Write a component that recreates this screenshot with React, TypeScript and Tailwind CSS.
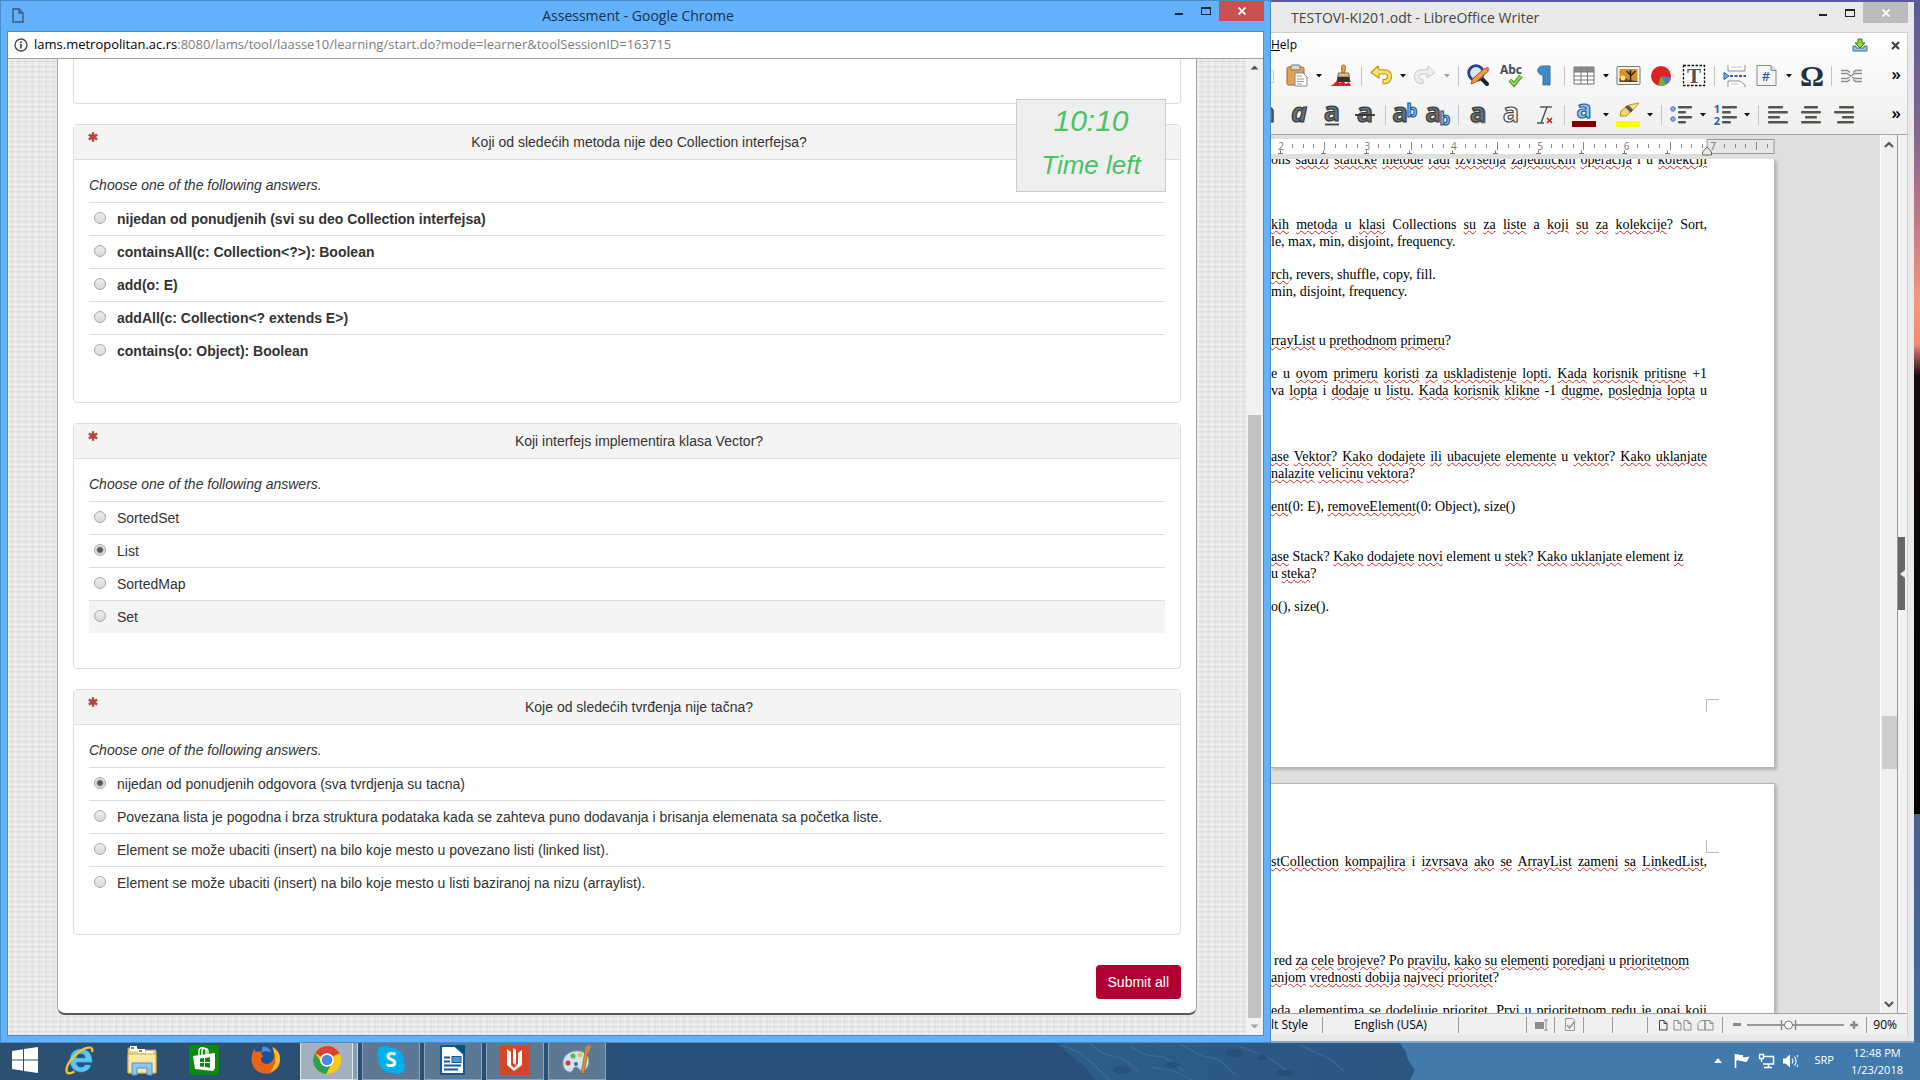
import React, { type ReactNode } from 'react';

type Question = { id: string; title: string; bold?: boolean; answers: string[]; selected?: number; hovered?: number };

const questions: Question[] = [
  {
    id: 'q1',
    title: 'Koji od sledećih metoda nije deo Collection interfejsa?',
    bold: true,
    answers: [
      'nijedan od ponudjenih (svi su deo Collection interfejsa)',
      'containsAll(c: Collection<?>): Boolean',
      'add(o: E)',
      'addAll(c: Collection<? extends E>)',
      'contains(o: Object): Boolean',
    ],
  },
  {
    id: 'q2',
    title: 'Koji interfejs implementira klasa Vector?',
    answers: ['SortedSet', 'List', 'SortedMap', 'Set'],
    selected: 1,
    hovered: 3,
  },
  {
    id: 'q3',
    title: 'Koje od sledećih tvrđenja nije tačna?',
    answers: [
      'nijedan od ponudjenih odgovora (sva tvrdjenja su tacna)',
      'Povezana lista je pogodna i brza struktura podataka kada se zahteva puno dodavanja i brisanja elemenata sa početka liste.',
      'Element se može ubaciti (insert) na bilo koje mesto u povezano listi (linked list).',
      'Element se može ubaciti (insert) na bilo koje mesto u listi baziranoj na nizu (arraylist).',
    ],
    selected: 0,
  },
];

function Asterisk() {
  return (
    <svg width="10" height="10" viewBox="0 0 10 10" className="mt-1 shrink-0" aria-label="required">
      <path d="M5 0.3v9.4M0.8 2.6l8.4 4.8M9.2 2.6L0.8 7.4" stroke="#b8423f" strokeWidth="2.4" />
    </svg>
  );
}

function QuestionCard({ q }: { q: Question }) {
  return (
    <section className="rounded border border-[#dddddd]">
      <header className="flex h-[35px] items-start border-b border-[#dddddd] bg-[#f4f4f4] pt-[3px] pl-[14px]">
        <Asterisk />
        <h2 className="flex-1 pt-1 text-center leading-5">{q.title}</h2>
      </header>
      <fieldset className="px-[15px] pb-[35px]">
        <legend className="contents">
          <span className="flex h-[42px] items-center pt-2 italic">Choose one of the following answers.</span>
        </legend>
        {q.answers.map((a, i) => (
          <label
            key={a}
            className={
              'flex h-[33px] items-center border-t border-[#dddddd] pl-[5px] ' +
              (q.bold ? 'font-bold ' : '') +
              (q.hovered === i ? 'bg-[#f4f4f4]' : '')
            }
          >
            <input
              type="radio"
              name={q.id}
              defaultChecked={q.selected === i}
              className="mr-[11px] mb-0.5 h-3 w-3 appearance-none rounded-full border border-[#a9a9a9] bg-[linear-gradient(#ededed,#d9d9d9)] checked:bg-[radial-gradient(circle,#555555_0_2px,#e2e2e2_4px)]"
            />
            {a}
          </label>
        ))}
      </fieldset>
    </section>
  );
}

function ChromeWindow() {
  return (
    <section className="relative flex min-w-0 flex-[1269] flex-col border border-[#4a8bc9] bg-[#64b1fb] pb-[6px] font-['Open_Sans',sans-serif]">
      <header className="flex h-[30px] items-start pr-[6px]">
        <div className="flex-1 pt-[7px] pl-[11px]">
          <svg width="12" height="15" viewBox="0 0 12 15" fill="none" stroke="#3c5a78" strokeWidth="1.4">
            <path d="M1 1h6l4 4v9H1zM7 1v4h4" />
          </svg>
        </div>
        <h1 className="pt-[5px] text-[14px] leading-5 text-[#16304d]">Assessment - Google Chrome</h1>
        <div className="flex flex-1 justify-end">
          <button aria-label="Minimize" className="flex h-5 w-[27px] items-center justify-center">
            <span className="mt-1.5 h-0.5 w-2 bg-[#10263c]" />
          </button>
          <button aria-label="Maximize" className="flex h-5 w-[27px] items-center justify-center">
            <span className="h-2 w-2.5 border border-t-2 border-[#10263c]" />
          </button>
          <button aria-label="Close" className="flex h-5 w-[45px] items-center justify-center bg-[#c75050]">
            <svg width="8" height="8" viewBox="0 0 8 8" stroke="#fff" strokeWidth="1.8">
              <path d="M0.5 0.5l7 7M7.5 0.5l-7 7" />
            </svg>
          </button>
        </div>
      </header>
      <div className="mx-[6px] flex min-h-0 flex-1 flex-col border border-[#4a8bc9] bg-white">
        <div className="flex h-[27px] shrink-0 items-center border-b border-[#a0a0a0] pl-1.5">
          <svg width="14" height="14" viewBox="0 0 14 14" fill="none" stroke="#4a4a4a" strokeWidth="1.4" className="mr-1.5">
            <circle cx="7" cy="7" r="6" />
            <path d="M7 6v4.5M7 3.3v1.6" strokeWidth="1.8" />
          </svg>
          <p className="text-[13px] text-[#7d7d7d]">
            <span className="text-black">lams.metropolitan.ac.rs</span>
            :8080/lams/tool/laasse10/learning/start.do?mode=learner&amp;toolSessionID=163715
          </p>
        </div>
        <div className="flex min-h-0 flex-1">
          <div className="flex-1 overflow-hidden bg-[#e8e8e8] bg-[repeating-linear-gradient(90deg,rgba(255,255,255,0.3)_0_1px,transparent_1px_3px,rgba(190,190,190,0.2)_3px_4px,transparent_4px_7px),repeating-linear-gradient(0deg,rgba(255,255,255,0.3)_0_1px,transparent_1px_3px,rgba(190,190,190,0.2)_3px_4px,transparent_4px_5px)] px-[49px] pb-5 font-['Liberation_Sans',Arial,sans-serif] text-[14px] text-[#333333]">
            <div className="flex h-full flex-col gap-5 rounded-b-lg border-x border-b-2 border-x-[#a8a8a8] border-b-[#5a5a5a] bg-white px-[15px]">
              <div className="h-[45px] shrink-0 rounded-b border border-t-0 border-[#dddddd]" />
              {questions.map((q) => (
                <QuestionCard key={q.id} q={q} />
              ))}
              <div className="flex justify-end pt-2.5">
                <button className="h-[34px] rounded bg-[#b00033] px-3 text-white">Submit all</button>
              </div>
            </div>
          </div>
          <div className="flex w-[17px] flex-col items-center bg-[#f1f1f1]">
            <svg width="17" height="17" viewBox="0 0 17 17">
              <path d="M4.5 10.5l4-4 4 4z" fill="#505050" />
            </svg>
            <div className="flex-[339]" />
            <div className="w-[13px] flex-[603] bg-[#c1c1c1]" />
            <svg width="17" height="17" viewBox="0 0 17 17">
              <path d="M4.5 6.5l4 4 4-4z" fill="#a3a3a3" />
            </svg>
          </div>
        </div>
      </div>
      <aside className="absolute top-[98px] right-[104px] flex h-[93px] w-[150px] flex-col items-center border border-[#cccccc] bg-[#ededed]/90 font-['Liberation_Sans',Arial,sans-serif] text-[#4bc266] italic">
        <span className="pt-[3px] text-[30px] leading-9">10:10</span>
        <span className="pt-2 text-[26px] leading-9">Time left</span>
      </aside>
    </section>
  );
}

/* ---------- Writer ---------- */

function Ico({ children, w = 22 }: { children: ReactNode; w?: number }) {
  return (
    <button className="shrink-0">
      <svg width={w} height="24" viewBox={`0 0 ${w} 24`} className="block overflow-visible">
        {children}
      </svg>
    </button>
  );
}

function Drop({ faded = false }: { faded?: boolean }) {
  return (
    <button aria-label="More" className="flex w-[22px] shrink-0 justify-center">
      <svg width="6" height="4" viewBox="0 0 6 4">
        <path d="M0 0h6L3 3.6z" fill={faded ? '#a0a0a0' : '#111'} />
      </svg>
    </button>
  );
}

const Gap = () => <span className="w-[11px] shrink-0" />;
const Sep = () => <span className="mr-2 ml-[9px] h-5 w-px shrink-0 bg-[#c4c4c4]" />;
const SepTight = () => <span className="mr-2 h-5 w-px shrink-0 bg-[#c4c4c4]" />;

function Letter({
  x = 11,
  y = 19,
  size = 27,
  fill = '#6a7073',
  stroke = '#33383a',
  italic = false,
  children,
}: {
  x?: number;
  y?: number;
  size?: number;
  fill?: string;
  stroke?: string;
  italic?: boolean;
  children: string;
}) {
  return (
    <text
      x={x}
      y={y}
      textAnchor="middle"
      fontFamily="Open Sans, sans-serif"
      fontWeight="700"
      fontStyle={italic ? 'italic' : 'normal'}
      fontSize={size}
      fill={fill}
      stroke={stroke}
      strokeWidth="1.2"
    >
      {children}
    </text>
  );
}

function BarLines({ rows, x = 0 }: { rows: [number, number][]; x?: number }) {
  return (
    <g fill="#55554f">
      {rows.map(([dx, w], i) => (
        <rect key={i} x={x + dx} y={3 + i * 5} width={w} height="2.6" rx="1" />
      ))}
    </g>
  );
}

function StandardToolbar() {
  return (
    <div className="flex h-[38px] items-center pr-[6px]">
      <span className="h-[13px] w-[3px] border-y border-r border-[#cccccc]" />
      <span className="w-3 shrink-0" />
      <Ico>
        <rect x="1" y="3" width="17" height="18" rx="1.5" fill="#e0a352" stroke="#9c6a24" />
        <rect x="5" y="1" width="9" height="5" rx="1" fill="#d8d8d4" stroke="#77776f" />
        <path d="M9 9h8l4 4v9H9z" fill="#fff" stroke="#8a8a8a" />
        <path d="M11 12h5M11 15h7M11 17.5h7M11 20h5" stroke="#999" />
      </Ico>
      <Drop />
      <Ico>
        <path d="M13.5 1c2 0 2 1.500 1.700 4l-.4 4h-2.800l-.3-4c-.3-2.500 0-4 1.800-4z" fill="#e6a54a" stroke="#9c6a24" />
        <path d="M8.500 9h10l1 4h-12z" fill="#d9c08a" stroke="#8a6a30" />
        <path d="M7.500 13h12l1 5h-14z" fill="#333" />
        <path d="M0 22c4-1 5-4 7-5l3 2 3-2 3 3 3-2 2 4z" fill="#d3222d" />
      </Ico>
      <Sep />
      <Ico>
        <path
          d="M8 2L1 8.500l8 5.500v-4h6c3.500 0 3.500 5 0 5.500l-2 .2v4c11 1 11-13.700 2-13.900H9z"
          fill="#fbe46b"
          stroke="#c19a1b"
          strokeWidth="1.200"
          strokeLinejoin="round"
        />
      </Ico>
      <Drop />
      <Ico>
        <path
          d="M14 2l7 6.500-8 5.500v-4H8c-3.500 0-3.500 5 0 5.500l1 .2v4C-2 20.700-2 6 7 5.800h6.500z"
          fill="#eeeeee"
          stroke="#c6c6c6"
          strokeLinejoin="round"
        />
      </Ico>
      <Drop faded />
      <SepTight />
      <Ico>
        <path d="M14 14l6 6" stroke="#222" strokeWidth="4" strokeLinecap="round" />
        <circle cx="9" cy="9" r="7.300" fill="#d7e6f4" stroke="#27408b" strokeWidth="2.800" />
        <path d="M18 4l3.500 3L9 18l-5 2 1.500-5z" fill="#f29b3b" stroke="#a85a15" />
        <path d="M18 4l3.500 3 1-2.500-2-2z" fill="#e46a76" />
      </Ico>
      <Gap />
      <Ico>
        <text x="11" y="10" textAnchor="middle" fontFamily="Open Sans, sans-serif" fontWeight="700" fontSize="12" fill="#444a4e">
          Abc
        </text>
        <path d="M10 16l4 4.500L21 12" fill="none" stroke="#3f8a17" strokeWidth="4" />
        <path d="M10 16l4 4.500L21 12" fill="none" stroke="#94d94f" strokeWidth="2" />
      </Ico>
      <Gap />
      <Ico>
        <path d="M17 2H10c-7 0-7 9 0 9v10h3V5h1v16h3z" fill="#3f8fd0" stroke="#2b6ea8" strokeLinejoin="round" />
      </Ico>
      <Sep />
      <Ico>
        <path d="M1 3h20v17H1z" fill="#fff" stroke="#6f6f6f" />
        <path d="M1 3h20v5H1z" fill="#8b8b8b" />
        <path d="M1 8h20M1 12h20M1 16h20M8 3v17M14.500 3v17" stroke="#777" fill="none" />
      </Ico>
      <Drop />
      <Ico>
        <rect x="0" y="2.500" width="23" height="18" rx="1" fill="#f2f2f0" stroke="#77776f" />
        <rect x="2.500" y="5" width="18" height="13" fill="#dd8f2c" />
        <path d="M2.500 18v-4c3 1 6-1 9 2l9 1v1z" fill="#6c4a18" />
        <circle cx="6" cy="14" r="2.500" fill="#ffe27a" />
        <path d="M13.500 18v-7l-4-4M13.500 12l5-5M13.500 10V6" stroke="#2b1c0a" strokeWidth="1.400" fill="none" />
      </Ico>
      <Gap />
      <Ico>
        <circle cx="11" cy="12" r="10" fill="#dc2322" />
        <path d="M11 12l10 1.500a10 10 0 01-4.500 7z" fill="#4a7fc1" />
        <path d="M11 12l5.500 8.500a10 10 0 01-8.500 1z" fill="#6cb33e" />
      </Ico>
      <Gap />
      <Ico>
        <rect x="0.500" y="1.500" width="21" height="20" fill="#fff" stroke="#111" strokeDasharray="2.500 1.500" strokeWidth="1.300" />
        <text x="11" y="19" textAnchor="middle" fontFamily="Liberation Serif, serif" fontWeight="700" fontSize="21" fill="#4d5356">
          T
        </text>
      </Ico>
      <Sep />
      <Ico>
        <path d="M5 1v6h17V1M5 23v-6h12l5 4v2" fill="#fff" stroke="#8e8e8e" />
        <path d="M8 3h11M8 20h7" stroke="#bbb" />
        <path d="M7 12h16" stroke="#2e6099" strokeWidth="2" strokeDasharray="3 1.500" />
        <path d="M1 8.500l5 3.500-5 3.500z" fill="#7fb0e0" stroke="#2e6099" />
      </Ico>
      <Gap />
      <Ico>
        <path d="M1 1.500h14l5 5v15H1z" fill="#f6f6f6" stroke="#8b8b8b" />
        <path d="M15 1.500v5h5" fill="#ddd" stroke="#8b8b8b" />
        <text x="10" y="17" textAnchor="middle" fontFamily="Open Sans, sans-serif" fontSize="13" fontWeight="600" fill="#2b5f9e">
          #
        </text>
      </Ico>
      <Drop />
      <Ico>
        <text x="12" y="22" textAnchor="middle" fontFamily="Liberation Serif, serif" fontWeight="700" fontSize="30" fill="#2b3032">
          Ω
        </text>
      </Ico>
      <Sep />
      <Ico>
        <g fill="none" stroke="#8b8f90" strokeWidth="1.500">
          <path d="M10 8.500L7.500 6.500H1M13 8.500l2.500-2H22M10 15.500l-2.500 2H1M13 15.500l2.500 2H22" />
          <path d="M1 9.500h6l7.500 5H22M1 14.500h6l7.500-5H22" />
        </g>
      </Ico>
      <button className="ml-auto pb-1 text-[17px] leading-5 font-semibold">»</button>
    </div>
  );
}

function FormattingToolbar() {
  return (
    <div className="flex h-[39px] items-center pr-[6px]">
      <Ico w={6}>
        <Letter x={-4}>a</Letter>
      </Ico>
      <Gap />
      <Ico>
        <Letter italic>a</Letter>
      </Ico>
      <Gap />
      <Ico>
        <Letter y={18}>a</Letter>
        <path d="M4 21.500h14" stroke="#444" strokeWidth="1.800" />
      </Ico>
      <Gap />
      <Ico>
        <Letter>a</Letter>
        <path d="M1 12h20" stroke="#333" strokeWidth="1.800" />
      </Ico>
      <Sep />
      <Ico>
        <Letter x={6} size={26}>
          a
        </Letter>
        <Letter x={18} y={14} size={17} fill="#9dc1ea" stroke="#2a5a9a">
          b
        </Letter>
      </Ico>
      <Gap />
      <Ico>
        <Letter x={6} size={26}>
          a
        </Letter>
        <Letter x={18} y={22} size={17} fill="#9dc1ea" stroke="#2a5a9a">
          b
        </Letter>
      </Ico>
      <Sep />
      <Ico>
        <Letter x={12} y={20} fill="#aaa" stroke="#aaa">
          a
        </Letter>
        <Letter>a</Letter>
      </Ico>
      <Gap />
      <Ico>
        <Letter fill="#fff" stroke="#444">
          a
        </Letter>
      </Ico>
      <Gap />
      <Ico>
        <path d="M7 4h12M4 20h7M14 4L8 20" stroke="#555" strokeWidth="1.500" fill="none" />
        <path d="M14 15l5 5M19 15l-5 5" stroke="#d2232f" strokeWidth="1.700" />
      </Ico>
      <Sep />
      <Ico>
        <Letter y={15} size={25} fill="#9dc1ea" stroke="#2a5a9a">
          a
        </Letter>
        <rect x="-1" y="18" width="24" height="6" fill="#800000" />
      </Ico>
      <Drop />
      <Ico>
        <path d="M3 13l1-5 6-5 5 5-6 5z" fill="#f1dc61" stroke="#a88c2a" />
        <path d="M8 4l5.500 5.500 3-2.500-5.500-5z" fill="#555" />
        <path d="M12 2l10-2-6 7z" fill="#f4e27c" stroke="#b89c33" />
        <rect x="-1" y="18" width="24" height="6" fill="#ffff00" />
      </Ico>
      <Drop />
      <SepTight />
      <Ico>
        <circle cx="3" cy="6" r="2.200" fill="#8db4e2" stroke="#4272a8" />
        <circle cx="3" cy="16" r="2.200" fill="#8db4e2" stroke="#4272a8" />
        <BarLines x={8} rows={[[0, 14], [0, 8], [0, 14], [0, 8]]} />
      </Ico>
      <Drop />
      <Ico>
        <text x="3" y="10" textAnchor="middle" fontFamily="Open Sans, sans-serif" fontWeight="700" fontSize="11" fill="#2b5f9e">
          1
        </text>
        <text x="3" y="22" textAnchor="middle" fontFamily="Open Sans, sans-serif" fontWeight="700" fontSize="11" fill="#2b5f9e">
          2
        </text>
        <BarLines x={8} rows={[[0, 15], [0, 9], [0, 15], [0, 9]]} />
      </Ico>
      <Drop />
      <SepTight />
      <Ico>
        <BarLines x={1} rows={[[0, 15], [0, 20], [0, 12], [0, 20]]} />
      </Ico>
      <Gap />
      <Ico>
        <BarLines x={1} rows={[[3, 14], [0, 20], [4, 12], [0, 20]]} />
      </Ico>
      <Gap />
      <Ico>
        <BarLines x={1} rows={[[5, 15], [0, 20], [8, 12], [3, 17]]} />
      </Ico>
      <button className="ml-auto pb-1 text-[17px] leading-5 font-semibold">»</button>
    </div>
  );
}

const rulerTicks = Array.from({ length: 46 }, (_, i) => i);

function Ruler() {
  return (
    <div className="flex h-6 shrink-0 items-start bg-[#dfdfdf] pt-1">
      <svg width="504" height="20" viewBox="0 0 504 20" className="block">
        <rect x="0" y="0" width="436" height="15" fill="#fff" />
        <rect x="436" y="0.500" width="67" height="14" fill="#e6e6e6" stroke="#9a9a9a" />
        {rulerTicks.map((i) => {
          if (i % 8 === 0) {
            return (
              <text key={i} x={10 + i * 10.8} y="11" textAnchor="middle" fontFamily="Open Sans, sans-serif" fontSize="10" fill="#777">
                {2 + i / 8}
              </text>
            );
          }
          const half = i % 4 === 0;
          return <rect key={i} x={Math.round(10 + i * 10.8)} y={half ? 3 : 5} width="1" height={half ? 8 : 4} fill="#888" />;
        })}
        {rulerTicks.slice(0, 10).map((i) => (
          <path key={i} d={`M${Math.round(7 + i * 43)} 14.500h5m-2.500 0v-3`} stroke="#777" fill="none" />
        ))}
        <path d="M431.500 16v-3l4.500-5 4.500 5v3z" fill="#e8e8e8" stroke="#666" />
      </svg>
    </div>
  );
}

/* Words wrapped in underscores carry the spell-check squiggle. */
function DocLine({ text, justify = false, className = '' }: { text: string; justify?: boolean; className?: string }) {
  return (
    <p className={'h-[17px] whitespace-nowrap ' + (justify ? 'w-[436px] [text-align-last:justify] ' : '') + className}>
      {text.split('_').map((part, i) =>
        i % 2 === 1 ? (
          <span key={i} className="underline decoration-[#d0221c] decoration-wavy decoration-1 underline-offset-1">
            {part}
          </span>
        ) : (
          part
        ),
      )}
    </p>
  );
}

function WriterDocument() {
  return (
    <div className="flex min-h-0 flex-1 flex-col gap-[15px] overflow-hidden bg-[#dfdfdf] font-['Liberation_Serif','Times_New_Roman',serif] text-[14px] leading-[17px] text-black">
      <article className="h-[609px] w-[504px] shrink-0 overflow-hidden border-r border-b border-[#b5b5b5] bg-white shadow-[2px_2px_3px_rgba(0,0,0,0.2)]">
        <DocLine justify className="-mt-2" text="ons _sadrzi_ _staticke_ _metode_ _radi_ _izvrsenja_ _zajednickih_ _operacija_ i u _kolekciji_" />
        <DocLine justify className="mt-12" text="_kih_ _metoda_ u _klasi_ Collections _su_ _za_ _liste_ a _koji_ _su_ _za_ _kolekcije_? Sort," />
        <DocLine text="le, max, min, disjoint, frequency." />
        <DocLine className="mt-4" text="_rch_, revers, shuffle, copy, fill." />
        <DocLine text="min, disjoint, frequency." />
        <DocLine className="mt-8" text="_rrayList_ u _prethodnom_ _primeru_?" />
        <DocLine justify className="mt-4" text="e u _ovom_ _primeru_ _koristi_ _za_ _uskladistenje_ _lopti_. _Kada_ _korisnik_ _pritisne_ +1" />
        <DocLine justify text="va _lopta_ i _dodaje_ u _listu_. _Kada_ _korisnik_ _klikne_ -1 _dugme_, _poslednja_ _lopta_ u" />
        <DocLine justify className="mt-[49px]" text="_ase_ _Vektor_? _Kako_ _dodajete_ _ili_ _ubacujete_ _elemente_ u _vektor_? _Kako_ _uklanjate_" />
        <DocLine text="_nalazite_ _velicinu_ _vektora_?" />
        <DocLine className="mt-4" text="_ent_(0: E), _removeElement_(0: Object), size()" />
        <DocLine className="mt-[33px]" text="_ase_ Stack? _Kako_ _dodajete_ _novi_ element u _stek_? _Kako_ _uklanjate_ element _iz_" />
        <DocLine text="u _steka_?" />
        <DocLine className="mt-4" text="o(), size()." />
        <div className="mt-[84px] ml-[435px] h-[13px] w-[13px] border-t border-l border-[#bdbdbd]" />
      </article>
      <article className="w-[504px] flex-1 overflow-hidden border-t border-r border-[#b5b5b5] bg-white pt-14 shadow-[2px_2px_3px_rgba(0,0,0,0.2)]">
        <div className="ml-[435px] h-[13px] w-[13px] border-b border-l border-[#bdbdbd]" />
        <DocLine justify text="_stCollection_ _kompajlira_ i _izvrsava_ _ako_ _se_ _ArrayList_ _zameni_ _sa_ _LinkedList_," />
        <DocLine className="mt-[82px] pl-[3px]" text="red _za_ _cele_ _brojeve_? Po _pravilu_, _kako_ _su_ _elementi_ _poredjani_ u _prioritetnom_" />
        <DocLine text="_anjom_ _vrednosti_ _dobija_ _najveci_ _prioritet_?" />
        <DocLine justify className="mt-4" text="eda, elementima se dodeljuje prioritet. Prvi u prioritetnom redu je onaj koji" />
      </article>
    </div>
  );
}

const StatusSep = ({ className }: { className: string }) => (
  <span className={'h-[16px] w-px shrink-0 bg-[#9a9a9a] ' + className} />
);

function StatusBar() {
  return (
    <footer className="flex h-[22px] shrink-0 items-center border-t border-[#a0a0a0] bg-[#f0f0f0] pr-2.5 text-[12px] text-black">
      <span className="w-[51px] whitespace-nowrap">lt Style</span>
      <StatusSep className="" />
      <span className="w-[135px] text-center whitespace-nowrap">English (USA)</span>
      <StatusSep className="" />
      <StatusSep className="ml-[67px]" />
      <svg width="27" height="16" viewBox="0 0 27 16" className="shrink-0">
        <rect x="8" y="5" width="9" height="7" fill="#8c8c8c" />
        <path d="M17 3h4M17 13h4M19 3v10" stroke="#8c8c8c" />
      </svg>
      <StatusSep className="" />
      <svg width="28" height="16" viewBox="0 0 28 16" className="shrink-0" fill="none" stroke="#999">
        <path d="M10.500 1.500h7l2 2v10h-9z" />
        <path d="M12 8l2.500 3L20 4" strokeWidth="1.500" />
      </svg>
      <StatusSep className="" />
      <StatusSep className="ml-7" />
      <StatusSep className="ml-[34px]" />
      <svg width="74" height="16" viewBox="0 0 74 16" className="shrink-0" fill="none">
        <path d="M11.500 3.500h4.500l3 3v6.500h-7.500zM16 3.500v3h3" stroke="#444" />
        <path d="M26 3.500h4l3 3v6.500h-7zM30 3.500v3h3M36 3.500h4l3 3v6.500h-7zM40 3.500v3h3M50 6.500l3-3h4v9.500h-7zM57 3.500h5l3 3v6.500h-8zM62 3.500v3h3" stroke="#8d8d8d" />
      </svg>
      <StatusSep className="" />
      <button aria-label="Zoom out" className="ml-2.5 h-[3px] w-2 shrink-0 bg-[#8a8a8a]" />
      <svg width="97" height="14" viewBox="0 0 97 14" className="mx-1.5 shrink-0">
        <path d="M0 7h97" stroke="#9a9a9a" strokeWidth="2" />
        <path d="M34.500 2v10M48.500 2v10" stroke="#8a8a8a" strokeWidth="1.500" />
        <circle cx="41.500" cy="7" r="4" fill="#fff" stroke="#777" />
      </svg>
      <button aria-label="Zoom in" className="shrink-0">
        <svg width="8" height="8" viewBox="0 0 8 8" stroke="#8a8a8a" strokeWidth="2.400">
          <path d="M4 0v8M0 4h8" />
        </svg>
      </button>
      <StatusSep className="ml-2" />
      <span className="ml-auto">90%</span>
    </footer>
  );
}

function WriterWindow() {
  return (
    <section className="mt-0.5 flex min-w-0 flex-[637] flex-col border-b-2 border-[#8ba4bd] bg-[#e9e9e9] pr-[6px] pb-[6px] font-['Open_Sans',sans-serif]">
      <header className="flex h-[30px] shrink-0 items-start">
        <h1 className="flex-1 pt-[5px] pl-5 text-[14px] leading-[22px] whitespace-nowrap text-[#444444]">TESTOVI-KI201.odt - LibreOffice Writer</h1>
        <button aria-label="Minimize" className="flex h-[21px] w-[27px] items-center justify-center">
          <span className="mt-1 h-0.5 w-2 bg-[#222222]" />
        </button>
        <button aria-label="Maximize" className="flex h-[21px] w-[27px] items-center justify-center">
          <span className="h-2 w-2.5 border border-t-2 border-[#222222]" />
        </button>
        <button aria-label="Close" className="flex h-[21px] w-[45px] items-center justify-center bg-[#bcbcbc]">
          <svg width="8" height="8" viewBox="0 0 8 8" stroke="#fff" strokeWidth="1.800">
            <path d="M0.500 0.500l7 7M7.500 0.500l-7 7" />
          </svg>
        </button>
      </header>
      <div className="flex min-h-0 flex-1 flex-col border-t border-r border-[#cfcfcf]">
        <div className="shrink-0 border-b border-[#a8a8a8] bg-[linear-gradient(#ffffff,#efefef)]">
          <nav className="flex h-6 items-center pr-[7px] text-[12px]">
            <button className="flex-1 text-left text-black">
              <span className="underline">H</span>elp
            </button>
            <svg width="16" height="14" viewBox="0 0 16 14" className="mr-[23px]">
              <path d="M1 8v5h14V8h-3v2H4V8z" fill="#9fc3e6" stroke="#3d6c9c" />
              <path d="M6 1h4v4h3L8 10 3 5h3z" fill="#9bd637" stroke="#3c7d12" />
            </svg>
            <button aria-label="Close document">
              <svg width="9" height="9" viewBox="0 0 9 9" stroke="#444" strokeWidth="2.200">
                <path d="M1 1l7 7M8 1L1 8" />
              </svg>
            </button>
          </nav>
          <StandardToolbar />
          <FormattingToolbar />
        </div>
        <div className="flex min-h-0 flex-1">
          <div className="flex min-w-0 flex-1 flex-col">
            <Ruler />
            <WriterDocument />
          </div>
          <div className="flex w-[17px] flex-col items-center border-l border-white bg-[#f0f0f0]">
            <svg width="16" height="18" viewBox="0 0 16 18" className="shrink-0">
              <path d="M4 12l4-4 4 4" fill="none" stroke="#555" strokeWidth="2.200" />
            </svg>
            <div className="flex-[563]" />
            <div className="w-[15px] flex-[53] bg-[#cdcdcd]" />
            <div className="flex-[226]" />
            <svg width="16" height="18" viewBox="0 0 16 18" className="shrink-0">
              <path d="M4 7l4 4 4-4" fill="none" stroke="#555" strokeWidth="2.200" />
            </svg>
          </div>
          <div className="flex w-2.5 flex-col border-l border-[#9a9a9a] bg-[#f2f2f2]">
            <div className="flex-[402]" />
            <button aria-label="Show sidebar" className="mr-0.5 flex h-[73px] items-center justify-end bg-[#666666]">
              <svg width="5" height="8" viewBox="0 0 5 8">
                <path d="M5 0v8L0 4z" fill="#eee" />
              </svg>
            </button>
            <div className="flex-[403]" />
          </div>
        </div>
        <StatusBar />
      </div>
    </section>
  );
}

/* ---------- Taskbar ---------- */

function TaskIcon({ label, children }: { label: string; children: ReactNode }) {
  return (
    <button aria-label={label} className="flex h-full w-[58px] items-center justify-center border border-t-0 border-[#8fa5ba] bg-[#5c7893] pb-0.5">
      <svg width="30" height="30" viewBox="0 0 30 30">
        {children}
      </svg>
    </button>
  );
}

function PinnedIcon({ label, children }: { label: string; children: ReactNode }) {
  return (
    <button aria-label={label} className="flex h-full w-[62px] items-center justify-center pb-1">
      <svg width="32" height="32" viewBox="0 0 32 32">
        {children}
      </svg>
    </button>
  );
}

function Taskbar() {
  return (
    <footer className="relative flex h-[37px] shrink-0 items-stretch bg-[#427aac] font-['Open_Sans',sans-serif]">
      <svg className="absolute inset-0 h-full w-full" viewBox="0 0 1920 37" preserveAspectRatio="none" aria-hidden="true">
        <defs>
          <linearGradient id="sea" x1="0" x2="1">
            <stop offset="0" stopColor="#2c5072" />
            <stop offset="0.600" stopColor="#284f77" />
            <stop offset="1" stopColor="#27507a" />
          </linearGradient>
          <linearGradient id="rock" x1="0" x2="1">
            <stop offset="0" stopColor="#356a99" />
            <stop offset="0.600" stopColor="#2f618f" />
            <stop offset="1" stopColor="#2a5680" />
          </linearGradient>
        </defs>
        <path d="M0 0h1400l6 9 2 8 7 10-5 10H0z" fill="url(#rock)" />
        <path d="M0 0h1056l14 12 12 9 14 16H0z" fill="url(#sea)" />
        <g fill="none" stroke="#4a7fae" strokeWidth="1.200" opacity="0.500">
          <path d="M1062 2l18 8 14 12 16 15M1090 1l12 9 22 6 14 12M1130 3l16 9 18 2 20 14M1180 1l22 12 16 3 18 16M1240 4l26 9 20 14M1300 2l30 14 14 12M1150 24l24 4 18 9" />
        </g>
        <g fill="#214a71" opacity="0.600">
          <ellipse cx="1122" cy="27" rx="9" ry="4" />
          <ellipse cx="1172" cy="22" rx="8" ry="3" />
          <ellipse cx="1234" cy="10" rx="9" ry="4" />
          <ellipse cx="1262" cy="14" rx="5" ry="3" />
          <ellipse cx="1285" cy="30" rx="10" ry="3" />
        </g>
      </svg>
      <div className="relative flex flex-1">
        <button aria-label="Start" className="flex h-full w-[49px] items-center justify-center pb-1">
          <svg width="26" height="26" viewBox="0 0 26 26" fill="#fff">
            <path d="M0 4l11-1.700v10.200H0zM12 2.100L26 0v12.500H12zM0 13.500h11v10.200L0 22zM12 13.500h14V26l-14-2.100z" />
          </svg>
        </button>
        <PinnedIcon label="Internet Explorer">
          <path d="M16.500 5C10 5 6 10 6 16.500S10.500 28 17 28c5 0 8.500-2.500 10-7h-6c-.8 1.500-2 2.300-4 2.300-3 0-4.700-2-4.900-5H28C28.500 10 24 5 16.500 5zm-4.300 9c.5-2.700 2-4.200 4.600-4.200s4.200 1.500 4.500 4.200z" fill="#5cc5f2" stroke="#2a94d6" strokeWidth="0.600" />
          <path d="M28 8c1-3.500-.5-5-4-4.300C15 5.500 2.500 18 2.500 26c0 4.500 4 4 8 1.500" fill="none" stroke="#f4c430" strokeWidth="2.300" />
        </PinnedIcon>
        <PinnedIcon label="File Explorer">
          <path d="M2 4h9l2 2h17v23H2z" fill="#f0d685" stroke="#c59e3e" />
          <path d="M4 2h7v5H4z" fill="#fff" />
          <path d="M5 3h3v2H5z" fill="#36a64a" />
          <path d="M12 5h7v4h-7z" fill="#fff" />
          <path d="M13 6h3v2h-3z" fill="#e5652b" />
          <path d="M20 7h7v3h-7z" fill="#fff" />
          <path d="M2 10h28v19H2z" fill="#f9e7a5" stroke="#d0ab4c" />
          <path d="M6 31V19h20v12h-5v-7H11v7z" fill="#8cc6ea" stroke="#4e98c6" />
        </PinnedIcon>
        <PinnedIcon label="Store">
          <rect x="1" y="1" width="30" height="30" fill="#0a8a0a" />
          <path d="M5 12l22-3v15l-2 3-18-2z" fill="#fff" />
          <path d="M11 12V7c0-4 7-4.500 7 0v4M14 11V7c0-4 6-3 6 0v3" fill="none" stroke="#fff" strokeWidth="1.400" />
          <path d="M12 14.500l4-.5v4h-4zM17 13.900l5-.6V18h-5zM12 19h4v4l-4-.5zM17 19h5v4.700l-5-.6z" fill="#0a8a0a" />
        </PinnedIcon>
        <PinnedIcon label="Firefox">
          <circle cx="16" cy="16" r="14" fill="#1f4f96" />
          <path d="M12 3c4-1 8 1 9 5-3-1-6-1-9 0z" fill="#4b8fd4" />
          <path d="M20 1.500c8 3 11 9 10 16-1 8-8 13-15 12C6 29 1 22 1.500 14c.2-4 1.500-7 3-9 .2 1.500.8 2.300 1.500 3 2-1 4-1 6 0-1 2-1 3 2 4-2 .500-3 2-3 4 1 4 6 5 9 3 4-2 5-8 3-13 2 1 2.500 2 3 3 0-3-3-6-6-8.500z" fill="#e8641b" />
          <path d="M22 3c7 4 9 9 7.500 15.500-1.500 5-5 8.500-9.500 9.500 5-5 8-14 2-25z" fill="#fbc02d" />
        </PinnedIcon>
        <span className="w-[3px]" />
        <button aria-label="Google Chrome" className="flex h-full w-[53px] items-center justify-center border border-t-0 border-[#dfe6ec] bg-[#a3b1bf] pb-0.5">
          <svg width="30" height="30" viewBox="0 0 30 30">
            <circle cx="15" cy="15" r="14" fill="#fbc916" />
            <path d="M15 15L2.900 8A14 14 0 0127.100 8z" fill="#dd4132" />
            <path d="M15 1a14 14 0 0112.600 8H15z" fill="#dd4132" />
            <path d="M2.900 8A14 14 0 0014 29l6-11-10.200 0z" fill="#2f9e4d" />
            <circle cx="15" cy="15" r="6.800" fill="#fff" />
            <circle cx="15" cy="15" r="5.300" fill="#4688f1" />
          </svg>
        </button>
        <span className="mr-1 w-[5px] border-r border-b border-[#c5d0da] bg-[#8b9dae]" />
        <div className="flex gap-1">
          <TaskIcon label="Skype">
            <path d="M8 1a7 7 0 017 2 12 12 0 0112.500 14A7.500 7.500 0 0117 27.500 12 12 0 012.800 13.500 7.500 7.500 0 018 1z" fill="#00aff0" />
            <text x="15" y="22" textAnchor="middle" fontFamily="Open Sans, sans-serif" fontSize="21" fontWeight="700" fill="#fff">
              S
            </text>
          </TaskIcon>
          <TaskIcon label="LibreOffice Writer">
            <path d="M3 1h14l9 8v20H3z" fill="#fff" stroke="#11598f" strokeWidth="2" />
            <path d="M17 0h10v10z" fill="#0b4d7c" />
            <path d="M6 12.500h6M6 16.500h6M6 20.500h17M6 24.500h14" stroke="#11598f" strokeWidth="1.800" />
            <rect x="14" y="11.500" width="9" height="6" fill="#4a9bd0" stroke="#11598f" />
          </TaskIcon>
          <TaskIcon label="Reader">
            <rect x="0" y="0" width="30" height="30" fill="#d24726" />
            <path d="M7 4l4 3v13l3 3v3l-7-6zM13 3l3 2v15l-3-2zM18 8l4-3v15l-8 6v-3l4-4z" fill="#fff" />
          </TaskIcon>
          <TaskIcon label="Paint">
            <path d="M15 6C7 6 1 11 1 18c0 6 4 9 7 9 4 0 2-5 6-5s4 7 9 3c3-3 5-8 3-13-2-4-6-6-11-6z" fill="#cfe3f3" stroke="#7fa6c6" />
            <circle cx="6" cy="18" r="2.500" fill="#d8342c" />
            <circle cx="11" cy="11" r="2.500" fill="#5cb644" />
            <circle cx="18" cy="10" r="2.300" fill="#f2c21f" />
            <circle cx="14" cy="19" r="2" fill="#3d6b94" />
            <path d="M26 7l-4 22-3-1 4-22z" fill="#d98b3d" stroke="#9a5a1c" strokeWidth="0.600" />
            <path d="M23 7c-1-4 1-7 6-7-1 3 0 5-3 8z" fill="#c98446" />
          </TaskIcon>
        </div>
      </div>
      <div className="relative flex items-center pr-[17px] pb-0.5 text-white">
        <svg width="8" height="5" viewBox="0 0 8 5" className="mr-3">
          <path d="M0 5l4-5 4 5z" fill="#fff" />
        </svg>
        <svg width="64" height="16" viewBox="0 0 64 16" fill="none">
          <path d="M1.500 1v14" stroke="#fff" strokeWidth="1.600" />
          <path d="M2 1.500c3-1 4 1 7 .5v6c-3 .5-4-1.500-7-.5zM9 4c2 .5 4 0 6.500-.5L13 8.500c-1.500.5-2.500.5-4 0z" fill="#fff" />
          <path d="M30 3.500h9.500v7.500H29M34.500 11v3M30 14.500h8" stroke="#fff" strokeWidth="1.500" />
          <path d="M25.500 1.500h4v4h-4zM27.500 6v3" stroke="#fff" strokeWidth="1.300" />
          <path d="M49 5.500h2.500L56 1.500v13l-4.500-4H49z" fill="#fff" />
          <path d="M58 5.500c1 1.500 1 3.500 0 5M60.500 3.500c2 2.500 2 6.500 0 9M63 2c2.500 3.500 2.500 8.500 0 12" stroke="#fff" strokeWidth="1.100" />
        </svg>
        <span className="mr-[17px] ml-4 text-[11px]">SRP</span>
        <p className="text-center text-[11px] leading-[17px]">
          12:48 PM
          <br />
          1/23/2018
        </p>
      </div>
    </footer>
  );
}

export default function App() {
  return (
    <div className="flex h-screen flex-col overflow-hidden bg-[#5b5b9e]">
      <main className="flex min-h-0 flex-1">
        <ChromeWindow />
        <WriterWindow />
        <div className="w-1.5 bg-[linear-gradient(#5b5b98_0%,#7d6590_12%,#c9798a_22%,#f79878_29%,#f58a6c_33%,#a85a5a_34%,#140c12_36%,#000000_78%,#4d5f8c_78%,#3f6f9f_100%)]" />
      </main>
      <Taskbar />
    </div>
  );
}
